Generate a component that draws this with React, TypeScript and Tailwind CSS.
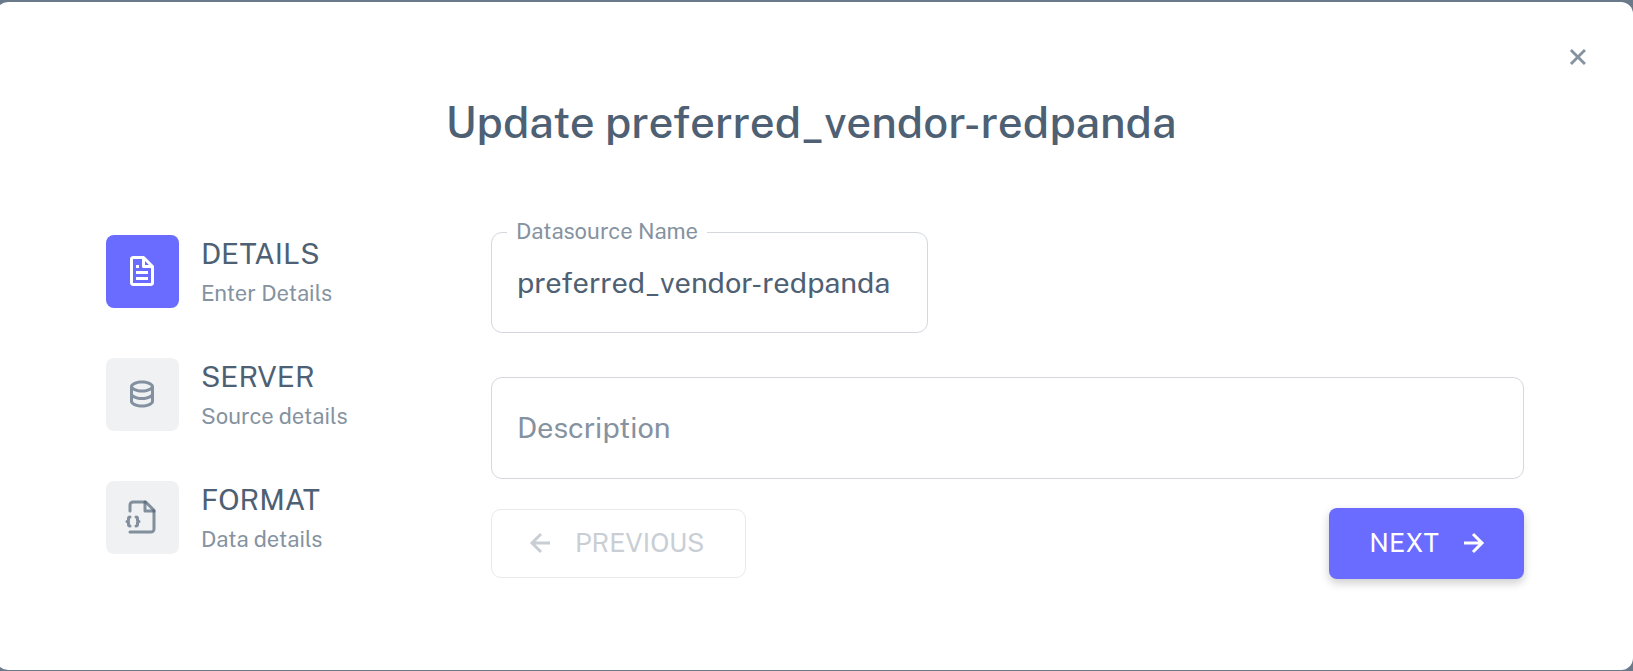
import { useState } from "react";
import type { ReactNode } from "react";
import { BiData, BiFile, BiLeftArrowAlt, BiRightArrowAlt, BiX } from "react-icons/bi";

function FileJsonIcon() {
  return (
    <svg
      className="size-9"
      viewBox="0 0 24 24"
      fill="none"
      stroke="rgba(78,96,115,0.68)"
      strokeWidth="2"
      strokeLinecap="round"
      strokeLinejoin="round"
      aria-hidden="true"
    >
      <path d="M4 22h14a2 2 0 0 0 2-2V7.500L14.500 2H6a2 2 0 0 0-2 2v4" />
      <path d="M14 2v6h6" />
      <path d="M4 12a1 1 0 0 0-1 1v1a1 1 0 0 1-1 1 1 1 0 0 1 1 1v1a1 1 0 0 0 1 1" />
      <path d="M8 18a1 1 0 0 0 1-1v-1a1 1 0 0 1 1-1 1 1 0 0 1-1-1v-1a1 1 0 0 0-1-1" />
    </svg>
  );
}

type StepProps = { icon: ReactNode; title: string; subtitle: string; active?: boolean };

function Step({ icon, title, subtitle, active = false }: StepProps) {
  return (
    <li>
      <button
        type="button"
        aria-current={active ? "step" : undefined}
        className="flex items-center gap-[22px] text-left"
      >
        <span
          className={
            active
              ? "flex size-[73px] items-center justify-center rounded-lg bg-[#696cff] pr-px text-white"
              : "flex size-[73px] items-center justify-center rounded-lg bg-[#eff1f3] pr-px text-[#8290a0]"
          }
        >
          {icon}
        </span>
        <span className="flex flex-col">
          <span className="text-[29px] leading-[44px] text-[#4e6073]">{title}</span>
          <span className="text-[22px] leading-[34px] text-[#8592a0]">{subtitle}</span>
        </span>
      </button>
    </li>
  );
}

export default function App() {
  const [name, setName] = useState("preferred_vendor-redpanda");
  const [description, setDescription] = useState("");

  return (
    <div className="overflow-hidden bg-[#6b7a8a] pt-[2px] pb-px font-['Public_Sans','Inter',sans-serif]">
      <main className="-ml-1 rounded-xl bg-white pt-[37px] pr-[37px] pb-[91px] pl-[110px]">
        <div className="flex justify-end">
          <button type="button" aria-label="Close" className="p-px text-[#8592a0]">
            <BiX className="size-[34px]" />
          </button>
        </div>
        <h1 className="mt-[21px] mr-20 text-center text-[44px] leading-[52px] font-medium text-[#4e6073]">
          Update preferred_vendor-redpanda
        </h1>
        <div className="mt-[84px] mr-[72px] flex">
          <ol className="flex w-[385px] shrink-0 flex-col gap-[45px]">
            <Step active icon={<BiFile className="size-9" />} title="DETAILS" subtitle="Enter Details" />
            <Step icon={<BiData className="size-9" />} title="SERVER" subtitle="Source details" />
            <Step icon={<FileJsonIcon />} title="FORMAT" subtitle="Data details" />
          </ol>
          <form className="min-w-0 flex-1" onSubmit={(e) => e.preventDefault()}>
            <div className="relative w-[437px]">
              <label
                htmlFor="datasource-name"
                className="absolute -top-4 left-4 bg-white px-[9px] text-[22px] leading-[30px] text-[#8592a0]"
              >
                Datasource Name
              </label>
              <input
                id="datasource-name"
                type="text"
                value={name}
                onChange={(e) => setName(e.target.value)}
                className="block h-[101px] w-full rounded-[11px] border border-[#d4d8dd] px-[25px] text-[29px] text-[#4e6073] outline-none"
              />
            </div>
            <input
              type="text"
              aria-label="Description"
              placeholder="Description"
              value={description}
              onChange={(e) => setDescription(e.target.value)}
              className="mt-11 block h-[102px] w-full rounded-[11px] border border-[#d4d8dd] px-[25px] pb-[2px] text-[29px] text-[#4e6073] outline-none placeholder:text-[#8592a0]"
            />
            <div className="mt-[29px] flex items-center justify-between">
              <button
                type="button"
                disabled
                className="flex h-[69px] items-center gap-4 rounded-[10px] border border-[#e7e9ec] pr-10 pb-[2px] pl-[31px] text-[26px] text-[#c9ced5]"
              >
                <BiLeftArrowAlt className="size-9" />
                PREVIOUS
              </button>
              <button
                type="submit"
                className="flex h-[71px] items-center gap-4 rounded-lg bg-[#696cff] pr-[33px] pb-[2px] pl-10 text-[26px] text-white shadow-[0_4px_10px_rgba(0,0,0,0.2)]"
              >
                NEXT
                <BiRightArrowAlt className="size-9" />
              </button>
            </div>
          </form>
        </div>
      </main>
    </div>
  );
}
